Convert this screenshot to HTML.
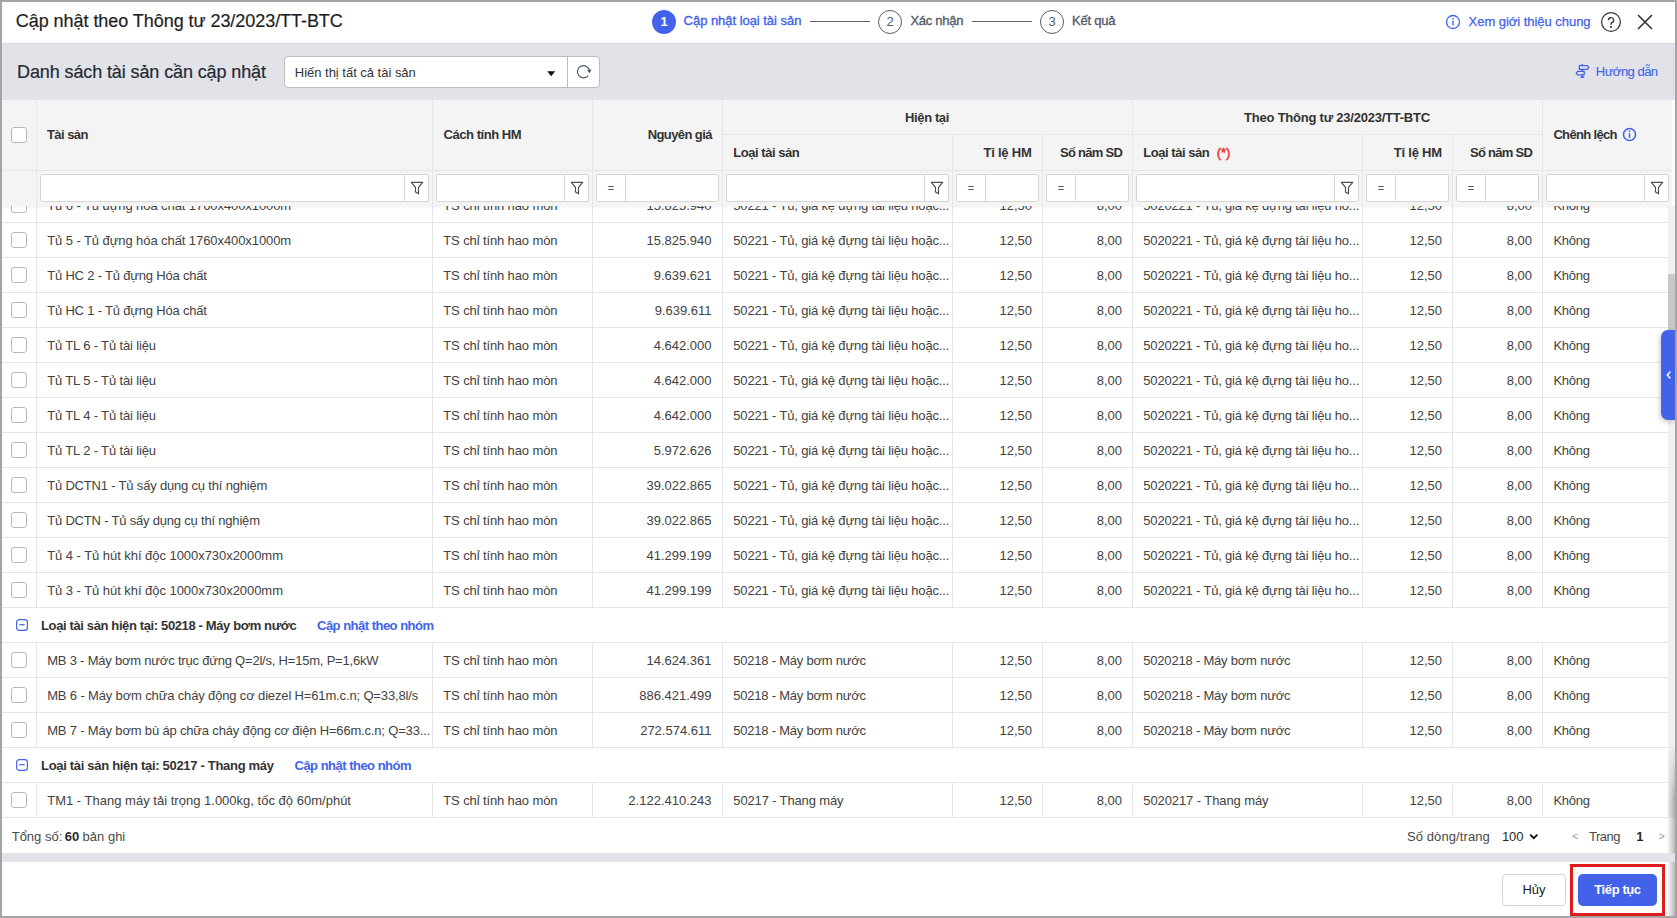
<!DOCTYPE html>
<html><head><meta charset="utf-8"><title>Cập nhật theo Thông tư 23/2023/TT-BTC</title>
<style>
*{box-sizing:border-box;margin:0;padding:0}
html,body{width:1677px;height:918px;overflow:hidden;background:#a4a4a4;font-family:"Liberation Sans", sans-serif;color:#424242}
.a{position:absolute}
.dlg{position:absolute;left:2px;top:2px;width:1673px;height:914px;background:#fff;overflow:hidden}
.t{position:absolute;white-space:nowrap;font-size:13px}
.vl{position:absolute;width:1px;background:#e6e6e6}
.hl{position:absolute;height:1px;background:#e6e6e6}
.cb{position:absolute;width:16px;height:16px;border:1px solid #b9b9b9;border-radius:3px;background:#fff}
.fi{position:absolute;height:28px;border:1px solid #d6d6d6;border-radius:2px;background:#fff}
.fb{position:absolute;top:0;right:0;width:24px;height:26px;border-left:1px solid #d6d6d6;display:flex;align-items:center;justify-content:center}
.fe{position:absolute;top:0;left:0;width:29px;height:26px;border-right:1px solid #d6d6d6;text-align:center;font-size:11px;line-height:26px;color:#555}
</style></head><body>
<div class="dlg">

<div class="a" style="left:0px;top:0px;width:1673px;height:42px;background:#fff;border-bottom:1px solid #d9d9d9"></div>
<div class="a" style="left:650px;top:8px;width:24px;height:24px;border-radius:50%;background:#4262e9;color:#fff;font-weight:700;font-size:13px;line-height:24px;text-align:center">1</div>
<div class="a" style="left:808px;top:19px;width:60px;height:1px;background:#5c6474"></div>
<div class="a" style="left:876px;top:8px;width:24px;height:24px;border-radius:50%;border:1px solid #535b6b;color:#535b6b;font-size:13px;line-height:22px;text-align:center">2</div>
<div class="a" style="left:970px;top:19px;width:60px;height:1px;background:#5c6474"></div>
<div class="a" style="left:1038px;top:8px;width:24px;height:24px;border-radius:50%;border:1px solid #535b6b;color:#535b6b;font-size:13px;line-height:22px;text-align:center">3</div>
<div class="a" style="left:1443px;top:12px;width:16px;height:16px;"><svg width="16" height="16" viewBox="0 0 16 16" style="display:block"><circle cx="8" cy="8" r="6.5" fill="none" stroke="#4262e9" stroke-width="1.3"/><rect x="7.3" y="6.7" width="1.4" height="4.8" fill="#4262e9"/><circle cx="8" cy="4.7" r="0.85" fill="#4262e9"/></svg></div>
<div class="a" style="left:1598px;top:9px;width:22px;height:22px;"><svg width="22" height="22" viewBox="0 0 22 22" style="display:block"><circle cx="11" cy="11" r="9.4" fill="none" stroke="#383838" stroke-width="1.3"/><path d="M8.4 9.3 a2.6 2.6 0 1 1 3.5 2.4 c-0.6 0.3 -0.9 0.8 -0.9 1.4 v0.6" fill="none" stroke="#383838" stroke-width="1.4"/><rect x="10.1" y="15.1" width="1.8" height="1.8" fill="#383838"/></svg></div>
<div class="a" style="left:1634px;top:11px;width:18px;height:18px;"><svg width="18" height="18" viewBox="0 0 18 18" style="display:block"><path d="M2 2 L16 16 M16 2 L2 16" stroke="#333" stroke-width="1.6"/></svg></div>
<div class="a" style="left:0px;top:42px;width:1673px;height:56px;background:#e1e3e8"></div>
<div class="a" style="left:282px;top:54px;width:316px;height:32px;background:#fff;border:1px solid #bdbdbd;border-radius:4px"></div>
<div class="a" style="left:565px;top:55px;width:1px;height:30px;background:#bdbdbd"></div>
<div class="a" style="left:544.5px;top:68.8px;width:9px;height:6px;"><svg width="9" height="6" viewBox="0 0 9 6" style="display:block"><path d="M0.2 0.3 H8.2 L4.2 5.3 Z" fill="#111"/></svg></div>
<div class="a" style="left:573px;top:60px;width:18px;height:18px;"><svg width="18" height="18" viewBox="0 0 18 18" style="display:block"><path d="M13.2 13.7 A6.1 6.1 0 1 1 14.4 8.1" fill="none" stroke="#4a4f66" stroke-width="1.1"/><path d="M12.1 8.1 L16.4 7.5 L14.6 11.3 Z" fill="#4a4f66"/></svg></div>
<div class="a" style="left:1573px;top:61px;width:16px;height:16px;"><svg width="16" height="16" viewBox="0 0 16 16" style="display:block"><path d="M7.3 1 V2.8 M7.3 6.2 V8.5 M7.3 11.7 V14.2 M5.4 14.3 H9.2" fill="none" stroke="#4262e9" stroke-width="1.5"/><path d="M4.3 2.7 H12.4 L13.8 4.5 L12.4 6.3 H4.3 Z M9.2 8.4 H2.6 L1.2 10.1 L2.6 11.8 H9.2 Z" fill="none" stroke="#4262e9" stroke-width="1.3" stroke-linejoin="round"/></svg></div>
<div class="a" style="left:0px;top:98px;width:1673px;height:106px;background:#f4f4f4"></div>
<div class="a" style="left:1670px;top:98px;width:3px;height:106px;background:#fbfbfb"></div>
<div class="hl" style="left:720px;top:132px;width:820px;height:1px;"></div>
<div class="hl" style="left:0px;top:168px;width:1670px;height:1px;"></div>
<div class="vl" style="left:34px;top:98px;width:1px;height:70px;"></div>
<div class="vl" style="left:430px;top:98px;width:1px;height:70px;"></div>
<div class="vl" style="left:590px;top:98px;width:1px;height:70px;"></div>
<div class="vl" style="left:720px;top:98px;width:1px;height:70px;"></div>
<div class="vl" style="left:1130px;top:98px;width:1px;height:70px;"></div>
<div class="vl" style="left:1540px;top:98px;width:1px;height:70px;"></div>
<div class="vl" style="left:950px;top:133px;width:1px;height:35px;"></div>
<div class="vl" style="left:1040px;top:133px;width:1px;height:35px;"></div>
<div class="vl" style="left:1360px;top:133px;width:1px;height:35px;"></div>
<div class="vl" style="left:1450px;top:133px;width:1px;height:35px;"></div>
<div class="vl" style="left:34px;top:169px;width:1px;height:35px;"></div>
<div class="vl" style="left:430px;top:169px;width:1px;height:35px;"></div>
<div class="vl" style="left:590px;top:169px;width:1px;height:35px;"></div>
<div class="vl" style="left:720px;top:169px;width:1px;height:35px;"></div>
<div class="vl" style="left:950px;top:169px;width:1px;height:35px;"></div>
<div class="vl" style="left:1040px;top:169px;width:1px;height:35px;"></div>
<div class="vl" style="left:1130px;top:169px;width:1px;height:35px;"></div>
<div class="vl" style="left:1360px;top:169px;width:1px;height:35px;"></div>
<div class="vl" style="left:1450px;top:169px;width:1px;height:35px;"></div>
<div class="vl" style="left:1540px;top:169px;width:1px;height:35px;"></div>
<div class="cb" style="left:9px;top:125px;"></div>
<div class="a" style="left:1619.5px;top:125px;width:15px;height:15px;"><svg width="15" height="15" viewBox="0 0 15 15" style="display:block"><circle cx="7.5" cy="7.5" r="6.0" fill="none" stroke="#4262e9" stroke-width="1.55"/><rect x="6.75" y="6.2" width="1.5" height="4.6" fill="#4262e9"/><circle cx="7.5" cy="4.3" r="0.9" fill="#4262e9"/></svg></div>
<div class="fi" style="left:38px;top:172px;width:389px"><div class="fb"><svg width="14" height="14" viewBox="0 0 14 14" style="display:block"><path d="M1.3 1.4 H12.7 L8.5 6.4 V12.8 L5.5 10.9 V6.4 Z" fill="none" stroke="#4d4d4d" stroke-width="1.15" stroke-linejoin="round"/></svg></div></div>
<div class="fi" style="left:434px;top:172px;width:153px"><div class="fb"><svg width="14" height="14" viewBox="0 0 14 14" style="display:block"><path d="M1.3 1.4 H12.7 L8.5 6.4 V12.8 L5.5 10.9 V6.4 Z" fill="none" stroke="#4d4d4d" stroke-width="1.15" stroke-linejoin="round"/></svg></div></div>
<div class="fi" style="left:594px;top:172px;width:123px"><div class="fe">=</div></div>
<div class="fi" style="left:724px;top:172px;width:223px"><div class="fb"><svg width="14" height="14" viewBox="0 0 14 14" style="display:block"><path d="M1.3 1.4 H12.7 L8.5 6.4 V12.8 L5.5 10.9 V6.4 Z" fill="none" stroke="#4d4d4d" stroke-width="1.15" stroke-linejoin="round"/></svg></div></div>
<div class="fi" style="left:954px;top:172px;width:83px"><div class="fe">=</div></div>
<div class="fi" style="left:1044px;top:172px;width:83px"><div class="fe">=</div></div>
<div class="fi" style="left:1134px;top:172px;width:223px"><div class="fb"><svg width="14" height="14" viewBox="0 0 14 14" style="display:block"><path d="M1.3 1.4 H12.7 L8.5 6.4 V12.8 L5.5 10.9 V6.4 Z" fill="none" stroke="#4d4d4d" stroke-width="1.15" stroke-linejoin="round"/></svg></div></div>
<div class="fi" style="left:1364px;top:172px;width:83px"><div class="fe">=</div></div>
<div class="fi" style="left:1454px;top:172px;width:83px"><div class="fe">=</div></div>
<div class="fi" style="left:1544px;top:172px;width:123px"><div class="fb"><svg width="14" height="14" viewBox="0 0 14 14" style="display:block"><path d="M1.3 1.4 H12.7 L8.5 6.4 V12.8 L5.5 10.9 V6.4 Z" fill="none" stroke="#4d4d4d" stroke-width="1.15" stroke-linejoin="round"/></svg></div></div>
<div class="a" style="left:0px;top:204px;width:1666px;height:612px;background:#fff;overflow:hidden">
<div class="hl" style="left:0px;top:16px;width:1666px;height:1px;"></div>
<div class="vl" style="left:34px;top:-19px;width:1px;height:35px;"></div>
<div class="vl" style="left:430px;top:-19px;width:1px;height:35px;"></div>
<div class="vl" style="left:590px;top:-19px;width:1px;height:35px;"></div>
<div class="vl" style="left:720px;top:-19px;width:1px;height:35px;"></div>
<div class="vl" style="left:950px;top:-19px;width:1px;height:35px;"></div>
<div class="vl" style="left:1040px;top:-19px;width:1px;height:35px;"></div>
<div class="vl" style="left:1130px;top:-19px;width:1px;height:35px;"></div>
<div class="vl" style="left:1360px;top:-19px;width:1px;height:35px;"></div>
<div class="vl" style="left:1450px;top:-19px;width:1px;height:35px;"></div>
<div class="vl" style="left:1540px;top:-19px;width:1px;height:35px;"></div>
<div class="cb" style="left:9px;top:-9px;"></div>
<div class="hl" style="left:0px;top:51px;width:1666px;height:1px;"></div>
<div class="vl" style="left:34px;top:16px;width:1px;height:35px;"></div>
<div class="vl" style="left:430px;top:16px;width:1px;height:35px;"></div>
<div class="vl" style="left:590px;top:16px;width:1px;height:35px;"></div>
<div class="vl" style="left:720px;top:16px;width:1px;height:35px;"></div>
<div class="vl" style="left:950px;top:16px;width:1px;height:35px;"></div>
<div class="vl" style="left:1040px;top:16px;width:1px;height:35px;"></div>
<div class="vl" style="left:1130px;top:16px;width:1px;height:35px;"></div>
<div class="vl" style="left:1360px;top:16px;width:1px;height:35px;"></div>
<div class="vl" style="left:1450px;top:16px;width:1px;height:35px;"></div>
<div class="vl" style="left:1540px;top:16px;width:1px;height:35px;"></div>
<div class="cb" style="left:9px;top:26px;"></div>
<div class="hl" style="left:0px;top:86px;width:1666px;height:1px;"></div>
<div class="vl" style="left:34px;top:51px;width:1px;height:35px;"></div>
<div class="vl" style="left:430px;top:51px;width:1px;height:35px;"></div>
<div class="vl" style="left:590px;top:51px;width:1px;height:35px;"></div>
<div class="vl" style="left:720px;top:51px;width:1px;height:35px;"></div>
<div class="vl" style="left:950px;top:51px;width:1px;height:35px;"></div>
<div class="vl" style="left:1040px;top:51px;width:1px;height:35px;"></div>
<div class="vl" style="left:1130px;top:51px;width:1px;height:35px;"></div>
<div class="vl" style="left:1360px;top:51px;width:1px;height:35px;"></div>
<div class="vl" style="left:1450px;top:51px;width:1px;height:35px;"></div>
<div class="vl" style="left:1540px;top:51px;width:1px;height:35px;"></div>
<div class="cb" style="left:9px;top:61px;"></div>
<div class="hl" style="left:0px;top:121px;width:1666px;height:1px;"></div>
<div class="vl" style="left:34px;top:86px;width:1px;height:35px;"></div>
<div class="vl" style="left:430px;top:86px;width:1px;height:35px;"></div>
<div class="vl" style="left:590px;top:86px;width:1px;height:35px;"></div>
<div class="vl" style="left:720px;top:86px;width:1px;height:35px;"></div>
<div class="vl" style="left:950px;top:86px;width:1px;height:35px;"></div>
<div class="vl" style="left:1040px;top:86px;width:1px;height:35px;"></div>
<div class="vl" style="left:1130px;top:86px;width:1px;height:35px;"></div>
<div class="vl" style="left:1360px;top:86px;width:1px;height:35px;"></div>
<div class="vl" style="left:1450px;top:86px;width:1px;height:35px;"></div>
<div class="vl" style="left:1540px;top:86px;width:1px;height:35px;"></div>
<div class="cb" style="left:9px;top:96px;"></div>
<div class="hl" style="left:0px;top:156px;width:1666px;height:1px;"></div>
<div class="vl" style="left:34px;top:121px;width:1px;height:35px;"></div>
<div class="vl" style="left:430px;top:121px;width:1px;height:35px;"></div>
<div class="vl" style="left:590px;top:121px;width:1px;height:35px;"></div>
<div class="vl" style="left:720px;top:121px;width:1px;height:35px;"></div>
<div class="vl" style="left:950px;top:121px;width:1px;height:35px;"></div>
<div class="vl" style="left:1040px;top:121px;width:1px;height:35px;"></div>
<div class="vl" style="left:1130px;top:121px;width:1px;height:35px;"></div>
<div class="vl" style="left:1360px;top:121px;width:1px;height:35px;"></div>
<div class="vl" style="left:1450px;top:121px;width:1px;height:35px;"></div>
<div class="vl" style="left:1540px;top:121px;width:1px;height:35px;"></div>
<div class="cb" style="left:9px;top:131px;"></div>
<div class="hl" style="left:0px;top:191px;width:1666px;height:1px;"></div>
<div class="vl" style="left:34px;top:156px;width:1px;height:35px;"></div>
<div class="vl" style="left:430px;top:156px;width:1px;height:35px;"></div>
<div class="vl" style="left:590px;top:156px;width:1px;height:35px;"></div>
<div class="vl" style="left:720px;top:156px;width:1px;height:35px;"></div>
<div class="vl" style="left:950px;top:156px;width:1px;height:35px;"></div>
<div class="vl" style="left:1040px;top:156px;width:1px;height:35px;"></div>
<div class="vl" style="left:1130px;top:156px;width:1px;height:35px;"></div>
<div class="vl" style="left:1360px;top:156px;width:1px;height:35px;"></div>
<div class="vl" style="left:1450px;top:156px;width:1px;height:35px;"></div>
<div class="vl" style="left:1540px;top:156px;width:1px;height:35px;"></div>
<div class="cb" style="left:9px;top:166px;"></div>
<div class="hl" style="left:0px;top:226px;width:1666px;height:1px;"></div>
<div class="vl" style="left:34px;top:191px;width:1px;height:35px;"></div>
<div class="vl" style="left:430px;top:191px;width:1px;height:35px;"></div>
<div class="vl" style="left:590px;top:191px;width:1px;height:35px;"></div>
<div class="vl" style="left:720px;top:191px;width:1px;height:35px;"></div>
<div class="vl" style="left:950px;top:191px;width:1px;height:35px;"></div>
<div class="vl" style="left:1040px;top:191px;width:1px;height:35px;"></div>
<div class="vl" style="left:1130px;top:191px;width:1px;height:35px;"></div>
<div class="vl" style="left:1360px;top:191px;width:1px;height:35px;"></div>
<div class="vl" style="left:1450px;top:191px;width:1px;height:35px;"></div>
<div class="vl" style="left:1540px;top:191px;width:1px;height:35px;"></div>
<div class="cb" style="left:9px;top:201px;"></div>
<div class="hl" style="left:0px;top:261px;width:1666px;height:1px;"></div>
<div class="vl" style="left:34px;top:226px;width:1px;height:35px;"></div>
<div class="vl" style="left:430px;top:226px;width:1px;height:35px;"></div>
<div class="vl" style="left:590px;top:226px;width:1px;height:35px;"></div>
<div class="vl" style="left:720px;top:226px;width:1px;height:35px;"></div>
<div class="vl" style="left:950px;top:226px;width:1px;height:35px;"></div>
<div class="vl" style="left:1040px;top:226px;width:1px;height:35px;"></div>
<div class="vl" style="left:1130px;top:226px;width:1px;height:35px;"></div>
<div class="vl" style="left:1360px;top:226px;width:1px;height:35px;"></div>
<div class="vl" style="left:1450px;top:226px;width:1px;height:35px;"></div>
<div class="vl" style="left:1540px;top:226px;width:1px;height:35px;"></div>
<div class="cb" style="left:9px;top:236px;"></div>
<div class="hl" style="left:0px;top:296px;width:1666px;height:1px;"></div>
<div class="vl" style="left:34px;top:261px;width:1px;height:35px;"></div>
<div class="vl" style="left:430px;top:261px;width:1px;height:35px;"></div>
<div class="vl" style="left:590px;top:261px;width:1px;height:35px;"></div>
<div class="vl" style="left:720px;top:261px;width:1px;height:35px;"></div>
<div class="vl" style="left:950px;top:261px;width:1px;height:35px;"></div>
<div class="vl" style="left:1040px;top:261px;width:1px;height:35px;"></div>
<div class="vl" style="left:1130px;top:261px;width:1px;height:35px;"></div>
<div class="vl" style="left:1360px;top:261px;width:1px;height:35px;"></div>
<div class="vl" style="left:1450px;top:261px;width:1px;height:35px;"></div>
<div class="vl" style="left:1540px;top:261px;width:1px;height:35px;"></div>
<div class="cb" style="left:9px;top:271px;"></div>
<div class="hl" style="left:0px;top:331px;width:1666px;height:1px;"></div>
<div class="vl" style="left:34px;top:296px;width:1px;height:35px;"></div>
<div class="vl" style="left:430px;top:296px;width:1px;height:35px;"></div>
<div class="vl" style="left:590px;top:296px;width:1px;height:35px;"></div>
<div class="vl" style="left:720px;top:296px;width:1px;height:35px;"></div>
<div class="vl" style="left:950px;top:296px;width:1px;height:35px;"></div>
<div class="vl" style="left:1040px;top:296px;width:1px;height:35px;"></div>
<div class="vl" style="left:1130px;top:296px;width:1px;height:35px;"></div>
<div class="vl" style="left:1360px;top:296px;width:1px;height:35px;"></div>
<div class="vl" style="left:1450px;top:296px;width:1px;height:35px;"></div>
<div class="vl" style="left:1540px;top:296px;width:1px;height:35px;"></div>
<div class="cb" style="left:9px;top:306px;"></div>
<div class="hl" style="left:0px;top:366px;width:1666px;height:1px;"></div>
<div class="vl" style="left:34px;top:331px;width:1px;height:35px;"></div>
<div class="vl" style="left:430px;top:331px;width:1px;height:35px;"></div>
<div class="vl" style="left:590px;top:331px;width:1px;height:35px;"></div>
<div class="vl" style="left:720px;top:331px;width:1px;height:35px;"></div>
<div class="vl" style="left:950px;top:331px;width:1px;height:35px;"></div>
<div class="vl" style="left:1040px;top:331px;width:1px;height:35px;"></div>
<div class="vl" style="left:1130px;top:331px;width:1px;height:35px;"></div>
<div class="vl" style="left:1360px;top:331px;width:1px;height:35px;"></div>
<div class="vl" style="left:1450px;top:331px;width:1px;height:35px;"></div>
<div class="vl" style="left:1540px;top:331px;width:1px;height:35px;"></div>
<div class="cb" style="left:9px;top:341px;"></div>
<div class="hl" style="left:0px;top:401px;width:1666px;height:1px;"></div>
<div class="vl" style="left:34px;top:366px;width:1px;height:35px;"></div>
<div class="vl" style="left:430px;top:366px;width:1px;height:35px;"></div>
<div class="vl" style="left:590px;top:366px;width:1px;height:35px;"></div>
<div class="vl" style="left:720px;top:366px;width:1px;height:35px;"></div>
<div class="vl" style="left:950px;top:366px;width:1px;height:35px;"></div>
<div class="vl" style="left:1040px;top:366px;width:1px;height:35px;"></div>
<div class="vl" style="left:1130px;top:366px;width:1px;height:35px;"></div>
<div class="vl" style="left:1360px;top:366px;width:1px;height:35px;"></div>
<div class="vl" style="left:1450px;top:366px;width:1px;height:35px;"></div>
<div class="vl" style="left:1540px;top:366px;width:1px;height:35px;"></div>
<div class="cb" style="left:9px;top:376px;"></div>
<div class="hl" style="left:0px;top:436px;width:1666px;height:1px;"></div>
<div class="a" style="left:14px;top:413px;width:12px;height:12px;"><svg width="12" height="12" viewBox="0 0 12 12" style="display:block"><rect x="0.6" y="0.6" width="10.8" height="10.8" rx="2.6" fill="none" stroke="#4262e9" stroke-width="1.15"/><rect x="3.3" y="5.1" width="5.4" height="1.2" fill="#4262e9"/></svg></div>
<div class="hl" style="left:0px;top:471px;width:1666px;height:1px;"></div>
<div class="vl" style="left:34px;top:436px;width:1px;height:35px;"></div>
<div class="vl" style="left:430px;top:436px;width:1px;height:35px;"></div>
<div class="vl" style="left:590px;top:436px;width:1px;height:35px;"></div>
<div class="vl" style="left:720px;top:436px;width:1px;height:35px;"></div>
<div class="vl" style="left:950px;top:436px;width:1px;height:35px;"></div>
<div class="vl" style="left:1040px;top:436px;width:1px;height:35px;"></div>
<div class="vl" style="left:1130px;top:436px;width:1px;height:35px;"></div>
<div class="vl" style="left:1360px;top:436px;width:1px;height:35px;"></div>
<div class="vl" style="left:1450px;top:436px;width:1px;height:35px;"></div>
<div class="vl" style="left:1540px;top:436px;width:1px;height:35px;"></div>
<div class="cb" style="left:9px;top:446px;"></div>
<div class="hl" style="left:0px;top:506px;width:1666px;height:1px;"></div>
<div class="vl" style="left:34px;top:471px;width:1px;height:35px;"></div>
<div class="vl" style="left:430px;top:471px;width:1px;height:35px;"></div>
<div class="vl" style="left:590px;top:471px;width:1px;height:35px;"></div>
<div class="vl" style="left:720px;top:471px;width:1px;height:35px;"></div>
<div class="vl" style="left:950px;top:471px;width:1px;height:35px;"></div>
<div class="vl" style="left:1040px;top:471px;width:1px;height:35px;"></div>
<div class="vl" style="left:1130px;top:471px;width:1px;height:35px;"></div>
<div class="vl" style="left:1360px;top:471px;width:1px;height:35px;"></div>
<div class="vl" style="left:1450px;top:471px;width:1px;height:35px;"></div>
<div class="vl" style="left:1540px;top:471px;width:1px;height:35px;"></div>
<div class="cb" style="left:9px;top:481px;"></div>
<div class="hl" style="left:0px;top:541px;width:1666px;height:1px;"></div>
<div class="vl" style="left:34px;top:506px;width:1px;height:35px;"></div>
<div class="vl" style="left:430px;top:506px;width:1px;height:35px;"></div>
<div class="vl" style="left:590px;top:506px;width:1px;height:35px;"></div>
<div class="vl" style="left:720px;top:506px;width:1px;height:35px;"></div>
<div class="vl" style="left:950px;top:506px;width:1px;height:35px;"></div>
<div class="vl" style="left:1040px;top:506px;width:1px;height:35px;"></div>
<div class="vl" style="left:1130px;top:506px;width:1px;height:35px;"></div>
<div class="vl" style="left:1360px;top:506px;width:1px;height:35px;"></div>
<div class="vl" style="left:1450px;top:506px;width:1px;height:35px;"></div>
<div class="vl" style="left:1540px;top:506px;width:1px;height:35px;"></div>
<div class="cb" style="left:9px;top:516px;"></div>
<div class="hl" style="left:0px;top:576px;width:1666px;height:1px;"></div>
<div class="a" style="left:14px;top:553px;width:12px;height:12px;"><svg width="12" height="12" viewBox="0 0 12 12" style="display:block"><rect x="0.6" y="0.6" width="10.8" height="10.8" rx="2.6" fill="none" stroke="#4262e9" stroke-width="1.15"/><rect x="3.3" y="5.1" width="5.4" height="1.2" fill="#4262e9"/></svg></div>
<div class="hl" style="left:0px;top:611px;width:1666px;height:1px;"></div>
<div class="vl" style="left:34px;top:576px;width:1px;height:35px;"></div>
<div class="vl" style="left:430px;top:576px;width:1px;height:35px;"></div>
<div class="vl" style="left:590px;top:576px;width:1px;height:35px;"></div>
<div class="vl" style="left:720px;top:576px;width:1px;height:35px;"></div>
<div class="vl" style="left:950px;top:576px;width:1px;height:35px;"></div>
<div class="vl" style="left:1040px;top:576px;width:1px;height:35px;"></div>
<div class="vl" style="left:1130px;top:576px;width:1px;height:35px;"></div>
<div class="vl" style="left:1360px;top:576px;width:1px;height:35px;"></div>
<div class="vl" style="left:1450px;top:576px;width:1px;height:35px;"></div>
<div class="vl" style="left:1540px;top:576px;width:1px;height:35px;"></div>
<div class="cb" style="left:9px;top:586px;"></div>
<div class="t" style="left:45.2px;top:-18px;height:35px;line-height:35px;font-size:13px;letter-spacing:-0.080px;">Tủ 6 - Tủ đựng hóa chất 1760x400x1000m</div>
<div class="t" style="left:441.3px;top:-18px;height:35px;line-height:35px;font-size:13px;letter-spacing:-0.119px;">TS chỉ tính hao mòn</div>
<div class="t" style="left:590px;top:-18px;height:35px;line-height:35px;font-size:13px;width:119.5px;text-align:right;">15.825.940</div>
<div class="t" style="left:731.3px;top:-18px;height:35px;line-height:35px;font-size:13px;letter-spacing:-0.164px;">50221 - Tủ, giá kệ đựng tài liệu hoặc...</div>
<div class="t" style="left:950px;top:-18px;height:35px;line-height:35px;font-size:13px;width:80px;text-align:right;">12,50</div>
<div class="t" style="left:1040px;top:-18px;height:35px;line-height:35px;font-size:13px;width:80px;text-align:right;">8,00</div>
<div class="t" style="left:1141.3px;top:-18px;height:35px;line-height:35px;font-size:13px;letter-spacing:-0.183px;">5020221 - Tủ, giá kệ đựng tài liệu ho...</div>
<div class="t" style="left:1360px;top:-18px;height:35px;line-height:35px;font-size:13px;width:80px;text-align:right;">12,50</div>
<div class="t" style="left:1450px;top:-18px;height:35px;line-height:35px;font-size:13px;width:80px;text-align:right;">8,00</div>
<div class="t" style="left:1551.4px;top:-18px;height:35px;line-height:35px;font-size:13px;letter-spacing:-0.273px;">Không</div>
<div class="t" style="left:45.2px;top:17px;height:35px;line-height:35px;font-size:13px;letter-spacing:-0.080px;">Tủ 5 - Tủ đựng hóa chất 1760x400x1000m</div>
<div class="t" style="left:441.3px;top:17px;height:35px;line-height:35px;font-size:13px;letter-spacing:-0.119px;">TS chỉ tính hao mòn</div>
<div class="t" style="left:590px;top:17px;height:35px;line-height:35px;font-size:13px;width:119.5px;text-align:right;">15.825.940</div>
<div class="t" style="left:731.3px;top:17px;height:35px;line-height:35px;font-size:13px;letter-spacing:-0.164px;">50221 - Tủ, giá kệ đựng tài liệu hoặc...</div>
<div class="t" style="left:950px;top:17px;height:35px;line-height:35px;font-size:13px;width:80px;text-align:right;">12,50</div>
<div class="t" style="left:1040px;top:17px;height:35px;line-height:35px;font-size:13px;width:80px;text-align:right;">8,00</div>
<div class="t" style="left:1141.3px;top:17px;height:35px;line-height:35px;font-size:13px;letter-spacing:-0.183px;">5020221 - Tủ, giá kệ đựng tài liệu ho...</div>
<div class="t" style="left:1360px;top:17px;height:35px;line-height:35px;font-size:13px;width:80px;text-align:right;">12,50</div>
<div class="t" style="left:1450px;top:17px;height:35px;line-height:35px;font-size:13px;width:80px;text-align:right;">8,00</div>
<div class="t" style="left:1551.4px;top:17px;height:35px;line-height:35px;font-size:13px;letter-spacing:-0.273px;">Không</div>
<div class="t" style="left:45.2px;top:52px;height:35px;line-height:35px;font-size:13px;letter-spacing:-0.194px;">Tủ HC 2 - Tủ đựng Hóa chất</div>
<div class="t" style="left:441.3px;top:52px;height:35px;line-height:35px;font-size:13px;letter-spacing:-0.119px;">TS chỉ tính hao mòn</div>
<div class="t" style="left:590px;top:52px;height:35px;line-height:35px;font-size:13px;width:119.5px;text-align:right;">9.639.621</div>
<div class="t" style="left:731.3px;top:52px;height:35px;line-height:35px;font-size:13px;letter-spacing:-0.164px;">50221 - Tủ, giá kệ đựng tài liệu hoặc...</div>
<div class="t" style="left:950px;top:52px;height:35px;line-height:35px;font-size:13px;width:80px;text-align:right;">12,50</div>
<div class="t" style="left:1040px;top:52px;height:35px;line-height:35px;font-size:13px;width:80px;text-align:right;">8,00</div>
<div class="t" style="left:1141.3px;top:52px;height:35px;line-height:35px;font-size:13px;letter-spacing:-0.183px;">5020221 - Tủ, giá kệ đựng tài liệu ho...</div>
<div class="t" style="left:1360px;top:52px;height:35px;line-height:35px;font-size:13px;width:80px;text-align:right;">12,50</div>
<div class="t" style="left:1450px;top:52px;height:35px;line-height:35px;font-size:13px;width:80px;text-align:right;">8,00</div>
<div class="t" style="left:1551.4px;top:52px;height:35px;line-height:35px;font-size:13px;letter-spacing:-0.273px;">Không</div>
<div class="t" style="left:45.2px;top:87px;height:35px;line-height:35px;font-size:13px;letter-spacing:-0.194px;">Tủ HC 1 - Tủ đựng Hóa chất</div>
<div class="t" style="left:441.3px;top:87px;height:35px;line-height:35px;font-size:13px;letter-spacing:-0.119px;">TS chỉ tính hao mòn</div>
<div class="t" style="left:590px;top:87px;height:35px;line-height:35px;font-size:13px;width:119.5px;text-align:right;">9.639.611</div>
<div class="t" style="left:731.3px;top:87px;height:35px;line-height:35px;font-size:13px;letter-spacing:-0.164px;">50221 - Tủ, giá kệ đựng tài liệu hoặc...</div>
<div class="t" style="left:950px;top:87px;height:35px;line-height:35px;font-size:13px;width:80px;text-align:right;">12,50</div>
<div class="t" style="left:1040px;top:87px;height:35px;line-height:35px;font-size:13px;width:80px;text-align:right;">8,00</div>
<div class="t" style="left:1141.3px;top:87px;height:35px;line-height:35px;font-size:13px;letter-spacing:-0.183px;">5020221 - Tủ, giá kệ đựng tài liệu ho...</div>
<div class="t" style="left:1360px;top:87px;height:35px;line-height:35px;font-size:13px;width:80px;text-align:right;">12,50</div>
<div class="t" style="left:1450px;top:87px;height:35px;line-height:35px;font-size:13px;width:80px;text-align:right;">8,00</div>
<div class="t" style="left:1551.4px;top:87px;height:35px;line-height:35px;font-size:13px;letter-spacing:-0.273px;">Không</div>
<div class="t" style="left:45.2px;top:122px;height:35px;line-height:35px;font-size:13px;letter-spacing:-0.148px;">Tủ TL 6 - Tủ tài liệu</div>
<div class="t" style="left:441.3px;top:122px;height:35px;line-height:35px;font-size:13px;letter-spacing:-0.119px;">TS chỉ tính hao mòn</div>
<div class="t" style="left:590px;top:122px;height:35px;line-height:35px;font-size:13px;width:119.5px;text-align:right;">4.642.000</div>
<div class="t" style="left:731.3px;top:122px;height:35px;line-height:35px;font-size:13px;letter-spacing:-0.164px;">50221 - Tủ, giá kệ đựng tài liệu hoặc...</div>
<div class="t" style="left:950px;top:122px;height:35px;line-height:35px;font-size:13px;width:80px;text-align:right;">12,50</div>
<div class="t" style="left:1040px;top:122px;height:35px;line-height:35px;font-size:13px;width:80px;text-align:right;">8,00</div>
<div class="t" style="left:1141.3px;top:122px;height:35px;line-height:35px;font-size:13px;letter-spacing:-0.183px;">5020221 - Tủ, giá kệ đựng tài liệu ho...</div>
<div class="t" style="left:1360px;top:122px;height:35px;line-height:35px;font-size:13px;width:80px;text-align:right;">12,50</div>
<div class="t" style="left:1450px;top:122px;height:35px;line-height:35px;font-size:13px;width:80px;text-align:right;">8,00</div>
<div class="t" style="left:1551.4px;top:122px;height:35px;line-height:35px;font-size:13px;letter-spacing:-0.273px;">Không</div>
<div class="t" style="left:45.2px;top:157px;height:35px;line-height:35px;font-size:13px;letter-spacing:-0.148px;">Tủ TL 5 - Tủ tài liệu</div>
<div class="t" style="left:441.3px;top:157px;height:35px;line-height:35px;font-size:13px;letter-spacing:-0.119px;">TS chỉ tính hao mòn</div>
<div class="t" style="left:590px;top:157px;height:35px;line-height:35px;font-size:13px;width:119.5px;text-align:right;">4.642.000</div>
<div class="t" style="left:731.3px;top:157px;height:35px;line-height:35px;font-size:13px;letter-spacing:-0.164px;">50221 - Tủ, giá kệ đựng tài liệu hoặc...</div>
<div class="t" style="left:950px;top:157px;height:35px;line-height:35px;font-size:13px;width:80px;text-align:right;">12,50</div>
<div class="t" style="left:1040px;top:157px;height:35px;line-height:35px;font-size:13px;width:80px;text-align:right;">8,00</div>
<div class="t" style="left:1141.3px;top:157px;height:35px;line-height:35px;font-size:13px;letter-spacing:-0.183px;">5020221 - Tủ, giá kệ đựng tài liệu ho...</div>
<div class="t" style="left:1360px;top:157px;height:35px;line-height:35px;font-size:13px;width:80px;text-align:right;">12,50</div>
<div class="t" style="left:1450px;top:157px;height:35px;line-height:35px;font-size:13px;width:80px;text-align:right;">8,00</div>
<div class="t" style="left:1551.4px;top:157px;height:35px;line-height:35px;font-size:13px;letter-spacing:-0.273px;">Không</div>
<div class="t" style="left:45.2px;top:192px;height:35px;line-height:35px;font-size:13px;letter-spacing:-0.148px;">Tủ TL 4 - Tủ tài liệu</div>
<div class="t" style="left:441.3px;top:192px;height:35px;line-height:35px;font-size:13px;letter-spacing:-0.119px;">TS chỉ tính hao mòn</div>
<div class="t" style="left:590px;top:192px;height:35px;line-height:35px;font-size:13px;width:119.5px;text-align:right;">4.642.000</div>
<div class="t" style="left:731.3px;top:192px;height:35px;line-height:35px;font-size:13px;letter-spacing:-0.164px;">50221 - Tủ, giá kệ đựng tài liệu hoặc...</div>
<div class="t" style="left:950px;top:192px;height:35px;line-height:35px;font-size:13px;width:80px;text-align:right;">12,50</div>
<div class="t" style="left:1040px;top:192px;height:35px;line-height:35px;font-size:13px;width:80px;text-align:right;">8,00</div>
<div class="t" style="left:1141.3px;top:192px;height:35px;line-height:35px;font-size:13px;letter-spacing:-0.183px;">5020221 - Tủ, giá kệ đựng tài liệu ho...</div>
<div class="t" style="left:1360px;top:192px;height:35px;line-height:35px;font-size:13px;width:80px;text-align:right;">12,50</div>
<div class="t" style="left:1450px;top:192px;height:35px;line-height:35px;font-size:13px;width:80px;text-align:right;">8,00</div>
<div class="t" style="left:1551.4px;top:192px;height:35px;line-height:35px;font-size:13px;letter-spacing:-0.273px;">Không</div>
<div class="t" style="left:45.2px;top:227px;height:35px;line-height:35px;font-size:13px;letter-spacing:-0.148px;">Tủ TL 2 - Tủ tài liệu</div>
<div class="t" style="left:441.3px;top:227px;height:35px;line-height:35px;font-size:13px;letter-spacing:-0.119px;">TS chỉ tính hao mòn</div>
<div class="t" style="left:590px;top:227px;height:35px;line-height:35px;font-size:13px;width:119.5px;text-align:right;">5.972.626</div>
<div class="t" style="left:731.3px;top:227px;height:35px;line-height:35px;font-size:13px;letter-spacing:-0.164px;">50221 - Tủ, giá kệ đựng tài liệu hoặc...</div>
<div class="t" style="left:950px;top:227px;height:35px;line-height:35px;font-size:13px;width:80px;text-align:right;">12,50</div>
<div class="t" style="left:1040px;top:227px;height:35px;line-height:35px;font-size:13px;width:80px;text-align:right;">8,00</div>
<div class="t" style="left:1141.3px;top:227px;height:35px;line-height:35px;font-size:13px;letter-spacing:-0.183px;">5020221 - Tủ, giá kệ đựng tài liệu ho...</div>
<div class="t" style="left:1360px;top:227px;height:35px;line-height:35px;font-size:13px;width:80px;text-align:right;">12,50</div>
<div class="t" style="left:1450px;top:227px;height:35px;line-height:35px;font-size:13px;width:80px;text-align:right;">8,00</div>
<div class="t" style="left:1551.4px;top:227px;height:35px;line-height:35px;font-size:13px;letter-spacing:-0.273px;">Không</div>
<div class="t" style="left:45.2px;top:262px;height:35px;line-height:35px;font-size:13px;letter-spacing:-0.184px;">Tủ DCTN1 - Tủ sấy dụng cụ thí nghiệm</div>
<div class="t" style="left:441.3px;top:262px;height:35px;line-height:35px;font-size:13px;letter-spacing:-0.119px;">TS chỉ tính hao mòn</div>
<div class="t" style="left:590px;top:262px;height:35px;line-height:35px;font-size:13px;width:119.5px;text-align:right;">39.022.865</div>
<div class="t" style="left:731.3px;top:262px;height:35px;line-height:35px;font-size:13px;letter-spacing:-0.164px;">50221 - Tủ, giá kệ đựng tài liệu hoặc...</div>
<div class="t" style="left:950px;top:262px;height:35px;line-height:35px;font-size:13px;width:80px;text-align:right;">12,50</div>
<div class="t" style="left:1040px;top:262px;height:35px;line-height:35px;font-size:13px;width:80px;text-align:right;">8,00</div>
<div class="t" style="left:1141.3px;top:262px;height:35px;line-height:35px;font-size:13px;letter-spacing:-0.183px;">5020221 - Tủ, giá kệ đựng tài liệu ho...</div>
<div class="t" style="left:1360px;top:262px;height:35px;line-height:35px;font-size:13px;width:80px;text-align:right;">12,50</div>
<div class="t" style="left:1450px;top:262px;height:35px;line-height:35px;font-size:13px;width:80px;text-align:right;">8,00</div>
<div class="t" style="left:1551.4px;top:262px;height:35px;line-height:35px;font-size:13px;letter-spacing:-0.273px;">Không</div>
<div class="t" style="left:45.2px;top:297px;height:35px;line-height:35px;font-size:13px;letter-spacing:-0.195px;">Tủ DCTN - Tủ sấy dụng cụ thí nghiệm</div>
<div class="t" style="left:441.3px;top:297px;height:35px;line-height:35px;font-size:13px;letter-spacing:-0.119px;">TS chỉ tính hao mòn</div>
<div class="t" style="left:590px;top:297px;height:35px;line-height:35px;font-size:13px;width:119.5px;text-align:right;">39.022.865</div>
<div class="t" style="left:731.3px;top:297px;height:35px;line-height:35px;font-size:13px;letter-spacing:-0.164px;">50221 - Tủ, giá kệ đựng tài liệu hoặc...</div>
<div class="t" style="left:950px;top:297px;height:35px;line-height:35px;font-size:13px;width:80px;text-align:right;">12,50</div>
<div class="t" style="left:1040px;top:297px;height:35px;line-height:35px;font-size:13px;width:80px;text-align:right;">8,00</div>
<div class="t" style="left:1141.3px;top:297px;height:35px;line-height:35px;font-size:13px;letter-spacing:-0.183px;">5020221 - Tủ, giá kệ đựng tài liệu ho...</div>
<div class="t" style="left:1360px;top:297px;height:35px;line-height:35px;font-size:13px;width:80px;text-align:right;">12,50</div>
<div class="t" style="left:1450px;top:297px;height:35px;line-height:35px;font-size:13px;width:80px;text-align:right;">8,00</div>
<div class="t" style="left:1551.4px;top:297px;height:35px;line-height:35px;font-size:13px;letter-spacing:-0.273px;">Không</div>
<div class="t" style="left:45.2px;top:332px;height:35px;line-height:35px;font-size:13px;letter-spacing:-0.048px;">Tủ 4 - Tủ hút khí độc 1000x730x2000mm</div>
<div class="t" style="left:441.3px;top:332px;height:35px;line-height:35px;font-size:13px;letter-spacing:-0.119px;">TS chỉ tính hao mòn</div>
<div class="t" style="left:590px;top:332px;height:35px;line-height:35px;font-size:13px;width:119.5px;text-align:right;">41.299.199</div>
<div class="t" style="left:731.3px;top:332px;height:35px;line-height:35px;font-size:13px;letter-spacing:-0.164px;">50221 - Tủ, giá kệ đựng tài liệu hoặc...</div>
<div class="t" style="left:950px;top:332px;height:35px;line-height:35px;font-size:13px;width:80px;text-align:right;">12,50</div>
<div class="t" style="left:1040px;top:332px;height:35px;line-height:35px;font-size:13px;width:80px;text-align:right;">8,00</div>
<div class="t" style="left:1141.3px;top:332px;height:35px;line-height:35px;font-size:13px;letter-spacing:-0.183px;">5020221 - Tủ, giá kệ đựng tài liệu ho...</div>
<div class="t" style="left:1360px;top:332px;height:35px;line-height:35px;font-size:13px;width:80px;text-align:right;">12,50</div>
<div class="t" style="left:1450px;top:332px;height:35px;line-height:35px;font-size:13px;width:80px;text-align:right;">8,00</div>
<div class="t" style="left:1551.4px;top:332px;height:35px;line-height:35px;font-size:13px;letter-spacing:-0.273px;">Không</div>
<div class="t" style="left:45.2px;top:367px;height:35px;line-height:35px;font-size:13px;letter-spacing:-0.048px;">Tủ 3 - Tủ hút khí độc 1000x730x2000mm</div>
<div class="t" style="left:441.3px;top:367px;height:35px;line-height:35px;font-size:13px;letter-spacing:-0.119px;">TS chỉ tính hao mòn</div>
<div class="t" style="left:590px;top:367px;height:35px;line-height:35px;font-size:13px;width:119.5px;text-align:right;">41.299.199</div>
<div class="t" style="left:731.3px;top:367px;height:35px;line-height:35px;font-size:13px;letter-spacing:-0.164px;">50221 - Tủ, giá kệ đựng tài liệu hoặc...</div>
<div class="t" style="left:950px;top:367px;height:35px;line-height:35px;font-size:13px;width:80px;text-align:right;">12,50</div>
<div class="t" style="left:1040px;top:367px;height:35px;line-height:35px;font-size:13px;width:80px;text-align:right;">8,00</div>
<div class="t" style="left:1141.3px;top:367px;height:35px;line-height:35px;font-size:13px;letter-spacing:-0.183px;">5020221 - Tủ, giá kệ đựng tài liệu ho...</div>
<div class="t" style="left:1360px;top:367px;height:35px;line-height:35px;font-size:13px;width:80px;text-align:right;">12,50</div>
<div class="t" style="left:1450px;top:367px;height:35px;line-height:35px;font-size:13px;width:80px;text-align:right;">8,00</div>
<div class="t" style="left:1551.4px;top:367px;height:35px;line-height:35px;font-size:13px;letter-spacing:-0.273px;">Không</div>
<div class="t" style="left:39px;top:402px;height:35px;line-height:35px;font-size:13px;font-weight:700;letter-spacing:-0.371px;color:#333">Loại tài sản hiện tại: 50218 - Máy bơm nước</div>
<div class="t" style="left:315px;top:402px;height:35px;line-height:35px;font-size:13px;font-weight:700;letter-spacing:-0.510px;color:#4262e9">Cập nhật theo nhóm</div>
<div class="t" style="left:45.2px;top:437px;height:35px;line-height:35px;font-size:13px;letter-spacing:-0.207px;">MB 3 - Máy bơm nước trục đứng Q=2l/s, H=15m, P=1,6kW</div>
<div class="t" style="left:441.3px;top:437px;height:35px;line-height:35px;font-size:13px;letter-spacing:-0.119px;">TS chỉ tính hao mòn</div>
<div class="t" style="left:590px;top:437px;height:35px;line-height:35px;font-size:13px;width:119.5px;text-align:right;">14.624.361</div>
<div class="t" style="left:731.3px;top:437px;height:35px;line-height:35px;font-size:13px;letter-spacing:-0.223px;">50218 - Máy bơm nước</div>
<div class="t" style="left:950px;top:437px;height:35px;line-height:35px;font-size:13px;width:80px;text-align:right;">12,50</div>
<div class="t" style="left:1040px;top:437px;height:35px;line-height:35px;font-size:13px;width:80px;text-align:right;">8,00</div>
<div class="t" style="left:1141.3px;top:437px;height:35px;line-height:35px;font-size:13px;letter-spacing:-0.205px;">5020218 - Máy bơm nước</div>
<div class="t" style="left:1360px;top:437px;height:35px;line-height:35px;font-size:13px;width:80px;text-align:right;">12,50</div>
<div class="t" style="left:1450px;top:437px;height:35px;line-height:35px;font-size:13px;width:80px;text-align:right;">8,00</div>
<div class="t" style="left:1551.4px;top:437px;height:35px;line-height:35px;font-size:13px;letter-spacing:-0.273px;">Không</div>
<div class="t" style="left:45.2px;top:472px;height:35px;line-height:35px;font-size:13px;letter-spacing:-0.149px;">MB 6 - Máy bơm chữa cháy động cơ diezel H=61m.c.n; Q=33,8l/s</div>
<div class="t" style="left:441.3px;top:472px;height:35px;line-height:35px;font-size:13px;letter-spacing:-0.119px;">TS chỉ tính hao mòn</div>
<div class="t" style="left:590px;top:472px;height:35px;line-height:35px;font-size:13px;width:119.5px;text-align:right;">886.421.499</div>
<div class="t" style="left:731.3px;top:472px;height:35px;line-height:35px;font-size:13px;letter-spacing:-0.223px;">50218 - Máy bơm nước</div>
<div class="t" style="left:950px;top:472px;height:35px;line-height:35px;font-size:13px;width:80px;text-align:right;">12,50</div>
<div class="t" style="left:1040px;top:472px;height:35px;line-height:35px;font-size:13px;width:80px;text-align:right;">8,00</div>
<div class="t" style="left:1141.3px;top:472px;height:35px;line-height:35px;font-size:13px;letter-spacing:-0.205px;">5020218 - Máy bơm nước</div>
<div class="t" style="left:1360px;top:472px;height:35px;line-height:35px;font-size:13px;width:80px;text-align:right;">12,50</div>
<div class="t" style="left:1450px;top:472px;height:35px;line-height:35px;font-size:13px;width:80px;text-align:right;">8,00</div>
<div class="t" style="left:1551.4px;top:472px;height:35px;line-height:35px;font-size:13px;letter-spacing:-0.273px;">Không</div>
<div class="t" style="left:45.2px;top:507px;height:35px;line-height:35px;font-size:13px;letter-spacing:-0.173px;">MB 7 - Máy bơm bù áp chữa cháy động cơ điện H=66m.c.n; Q=33...</div>
<div class="t" style="left:441.3px;top:507px;height:35px;line-height:35px;font-size:13px;letter-spacing:-0.119px;">TS chỉ tính hao mòn</div>
<div class="t" style="left:590px;top:507px;height:35px;line-height:35px;font-size:13px;width:119.5px;text-align:right;">272.574.611</div>
<div class="t" style="left:731.3px;top:507px;height:35px;line-height:35px;font-size:13px;letter-spacing:-0.223px;">50218 - Máy bơm nước</div>
<div class="t" style="left:950px;top:507px;height:35px;line-height:35px;font-size:13px;width:80px;text-align:right;">12,50</div>
<div class="t" style="left:1040px;top:507px;height:35px;line-height:35px;font-size:13px;width:80px;text-align:right;">8,00</div>
<div class="t" style="left:1141.3px;top:507px;height:35px;line-height:35px;font-size:13px;letter-spacing:-0.205px;">5020218 - Máy bơm nước</div>
<div class="t" style="left:1360px;top:507px;height:35px;line-height:35px;font-size:13px;width:80px;text-align:right;">12,50</div>
<div class="t" style="left:1450px;top:507px;height:35px;line-height:35px;font-size:13px;width:80px;text-align:right;">8,00</div>
<div class="t" style="left:1551.4px;top:507px;height:35px;line-height:35px;font-size:13px;letter-spacing:-0.273px;">Không</div>
<div class="t" style="left:39px;top:542px;height:35px;line-height:35px;font-size:13px;font-weight:700;letter-spacing:-0.305px;color:#333">Loại tài sản hiện tại: 50217 - Thang máy</div>
<div class="t" style="left:292.5px;top:542px;height:35px;line-height:35px;font-size:13px;font-weight:700;letter-spacing:-0.510px;color:#4262e9">Cập nhật theo nhóm</div>
<div class="t" style="left:45.2px;top:577px;height:35px;line-height:35px;font-size:13px;letter-spacing:0.011px;">TM1 - Thang máy tải trọng 1.000kg, tốc độ 60m/phút</div>
<div class="t" style="left:441.3px;top:577px;height:35px;line-height:35px;font-size:13px;letter-spacing:-0.119px;">TS chỉ tính hao mòn</div>
<div class="t" style="left:590px;top:577px;height:35px;line-height:35px;font-size:13px;width:119.5px;text-align:right;">2.122.410.243</div>
<div class="t" style="left:731.3px;top:577px;height:35px;line-height:35px;font-size:13px;letter-spacing:-0.144px;">50217 - Thang máy</div>
<div class="t" style="left:950px;top:577px;height:35px;line-height:35px;font-size:13px;width:80px;text-align:right;">12,50</div>
<div class="t" style="left:1040px;top:577px;height:35px;line-height:35px;font-size:13px;width:80px;text-align:right;">8,00</div>
<div class="t" style="left:1141.3px;top:577px;height:35px;line-height:35px;font-size:13px;letter-spacing:-0.093px;">5020217 - Thang máy</div>
<div class="t" style="left:1360px;top:577px;height:35px;line-height:35px;font-size:13px;width:80px;text-align:right;">12,50</div>
<div class="t" style="left:1450px;top:577px;height:35px;line-height:35px;font-size:13px;width:80px;text-align:right;">8,00</div>
<div class="t" style="left:1551.4px;top:577px;height:35px;line-height:35px;font-size:13px;letter-spacing:-0.273px;">Không</div>
</div>
<div class="a" style="left:0px;top:204px;width:1666px;height:3px;background:linear-gradient(rgba(0,0,0,0.05),rgba(0,0,0,0))"></div>
<div class="a" style="left:1666px;top:204px;width:7px;height:612px;background:#f1f1f1"></div>
<div class="a" style="left:1666px;top:272px;width:7px;height:146px;background:#c8c8c8"></div>
<div class="a" style="left:1665px;top:738px;width:8px;height:176px;background:linear-gradient(90deg,rgba(0,0,0,0),rgba(0,0,0,0.28));-webkit-mask-image:linear-gradient(rgba(0,0,0,0),#000 60px)"></div>
<div class="a" style="left:1659px;top:328px;width:14px;height:90px;background:#4262e9;border-radius:7px 0 0 7px;box-shadow:-1px 2px 5px rgba(0,0,0,0.22)"></div>
<div class="a" style="left:1663px;top:368px;width:8px;height:10px;"><svg width="8" height="10" viewBox="0 0 8 10" style="display:block"><path d="M5.3 1.6 L2.4 5 L5.3 8.4" fill="none" stroke="#fff" stroke-width="1.5"/></svg></div>
<div class="a" style="left:0px;top:851px;width:1673px;height:9px;background:#e1e3e8"></div>
<div class="a" style="left:1526.5px;top:830.5px;width:10px;height:8px;"><svg width="10" height="8" viewBox="0 0 10 8" style="display:block"><path d="M1.2 1.6 L4.8 5.2 L8.4 1.6" fill="none" stroke="#111" stroke-width="1.9"/></svg></div>
<div class="a" style="left:1500px;top:872px;width:64px;height:32px;border:1px solid #d2d2d2;border-radius:4px;background:#fff"></div>
<div class="a" style="left:1576px;top:872px;width:79px;height:32px;border-radius:5px;background:#4262e9"></div>
<div class="t" style="left:13.8px;top:0px;height:38px;line-height:38px;font-size:18px;letter-spacing:-0.053px;color:#1f1f1f;-webkit-text-stroke:0.2px #1f1f1f">Cập nhật theo Thông tư 23/2023/TT-BTC</div>
<div class="t" style="left:681.6px;top:7px;height:24px;line-height:24px;font-size:13px;letter-spacing:-0.037px;color:#4262e9;-webkit-text-stroke:0.35px #4262e9">Cập nhật loại tài sản</div>
<div class="t" style="left:908.4px;top:7px;height:24px;line-height:24px;font-size:13px;letter-spacing:-0.262px;color:#535b6b;-webkit-text-stroke:0.35px #535b6b">Xác nhận</div>
<div class="t" style="left:1070px;top:7px;height:24px;line-height:24px;font-size:13px;letter-spacing:-0.205px;color:#535b6b;-webkit-text-stroke:0.35px #535b6b">Kết quả</div>
<div class="t" style="left:1466.6px;top:8px;height:24px;line-height:24px;font-size:13px;letter-spacing:-0.038px;color:#4262e9;-webkit-text-stroke:0.25px #4262e9">Xem giới thiệu chung</div>
<div class="t" style="left:15px;top:42px;height:56px;line-height:56px;font-size:18px;letter-spacing:-0.109px;color:#262a33;-webkit-text-stroke:0.2px #262a33">Danh sách tài sản cần cập nhật</div>
<div class="t" style="left:292.8px;top:54.5px;height:32px;line-height:32px;font-size:13px;letter-spacing:-0.018px;color:#333">Hiến thị tất cả tài sản</div>
<div class="t" style="left:1593.8px;top:42px;height:56px;line-height:56px;font-size:13px;letter-spacing:-0.511px;color:#4262e9;-webkit-text-stroke:0.1px #4262e9">Hướng dẫn</div>
<div class="t" style="left:45px;top:98px;height:70px;line-height:70px;font-size:13px;font-weight:700;letter-spacing:-0.566px;color:#333">Tài sản</div>
<div class="t" style="left:441.6px;top:98px;height:70px;line-height:70px;font-size:13px;font-weight:700;letter-spacing:-0.460px;color:#333">Cách tính HM</div>
<div class="t" style="left:590px;top:98px;height:70px;line-height:70px;font-size:13px;font-weight:700;letter-spacing:-0.586px;width:119.886px;text-align:right;margin-right:0;color:#333">Nguyên giá</div>
<div class="t" style="left:720px;top:98px;height:35px;line-height:35px;font-size:13px;font-weight:700;letter-spacing:-0.381px;width:410px;text-align:center;color:#333">Hiện tại</div>
<div class="t" style="left:1130px;top:98px;height:35px;line-height:35px;font-size:13px;font-weight:700;letter-spacing:-0.228px;width:410px;text-align:center;color:#333">Theo Thông tư 23/2023/TT-BTC</div>
<div class="t" style="left:731.3px;top:133px;height:35px;line-height:35px;font-size:13px;font-weight:700;letter-spacing:-0.466px;color:#333">Loại tài sản</div>
<div class="t" style="left:950px;top:133px;height:35px;line-height:35px;font-size:13px;font-weight:700;letter-spacing:-0.221px;width:79.5205px;text-align:right;margin-right:0;color:#333">Tỉ lệ HM</div>
<div class="t" style="left:1040px;top:133px;height:35px;line-height:35px;font-size:13px;font-weight:700;letter-spacing:-0.716px;width:80.1156px;text-align:right;margin-right:0;color:#333">Số năm SD</div>
<div class="t" style="left:1141.3px;top:133px;height:35px;line-height:35px;font-size:13px;font-weight:700;letter-spacing:-0.466px;color:#333">Loại tài sản</div>
<div class="t" style="left:1214.7px;top:133px;height:35px;line-height:35px;font-size:13px;color:#e8302e;-webkit-text-stroke:0.45px #e8302e">(*)</div>
<div class="t" style="left:1360px;top:133px;height:35px;line-height:35px;font-size:13px;font-weight:700;letter-spacing:-0.221px;width:79.9205px;text-align:right;margin-right:0;color:#333">Tỉ lệ HM</div>
<div class="t" style="left:1450px;top:133px;height:35px;line-height:35px;font-size:13px;font-weight:700;letter-spacing:-0.716px;width:80.1156px;text-align:right;margin-right:0;color:#333">Số năm SD</div>
<div class="t" style="left:1551.4px;top:98px;height:70px;line-height:70px;font-size:13px;font-weight:700;letter-spacing:-0.664px;color:#333">Chênh lệch</div>
<div class="t" style="left:9.7px;top:817px;height:35px;line-height:35px;font-size:13px;color:#4a4a4a">Tổng số: </div>
<div class="t" style="left:62.7px;top:817px;height:35px;line-height:35px;font-size:13px;font-weight:700;color:#2a2a2a">60</div>
<div class="t" style="left:80.6px;top:817px;height:35px;line-height:35px;font-size:13px;color:#4a4a4a">bản ghi</div>
<div class="t" style="left:1405px;top:817px;height:35px;line-height:35px;font-size:13px;letter-spacing:0.093px;color:#4a4a4a">Số dòng/trang</div>
<div class="t" style="left:1499.9px;top:817px;height:35px;line-height:35px;font-size:13px;color:#2a2a2a">100</div>
<div class="t" style="left:1570px;top:817px;height:35px;line-height:35px;font-size:11px;color:#9a9a9a">&lt;</div>
<div class="t" style="left:1587px;top:817px;height:35px;line-height:35px;font-size:13px;letter-spacing:-0.496px;color:#4a4a4a">Trang</div>
<div class="t" style="left:1634.3px;top:817px;height:35px;line-height:35px;font-size:13px;font-weight:700;color:#2a2a2a">1</div>
<div class="t" style="left:1656.4px;top:817px;height:35px;line-height:35px;font-size:11px;color:#9a9a9a">&gt;</div>
<div class="t" style="left:1500px;top:872px;height:32px;line-height:32px;font-size:13px;width:64px;text-align:center;color:#1a1a2a">Hủy</div>
<div class="t" style="left:1576px;top:872px;height:32px;line-height:32px;font-size:13px;font-weight:700;letter-spacing:-0.401px;width:79px;text-align:center;color:#fff">Tiếp tục</div>
<div class="a" style="left:1568px;top:862px;width:95px;height:52px;border:3px solid #e01b1b;border-bottom-width:3px"></div>
</div></body></html>
